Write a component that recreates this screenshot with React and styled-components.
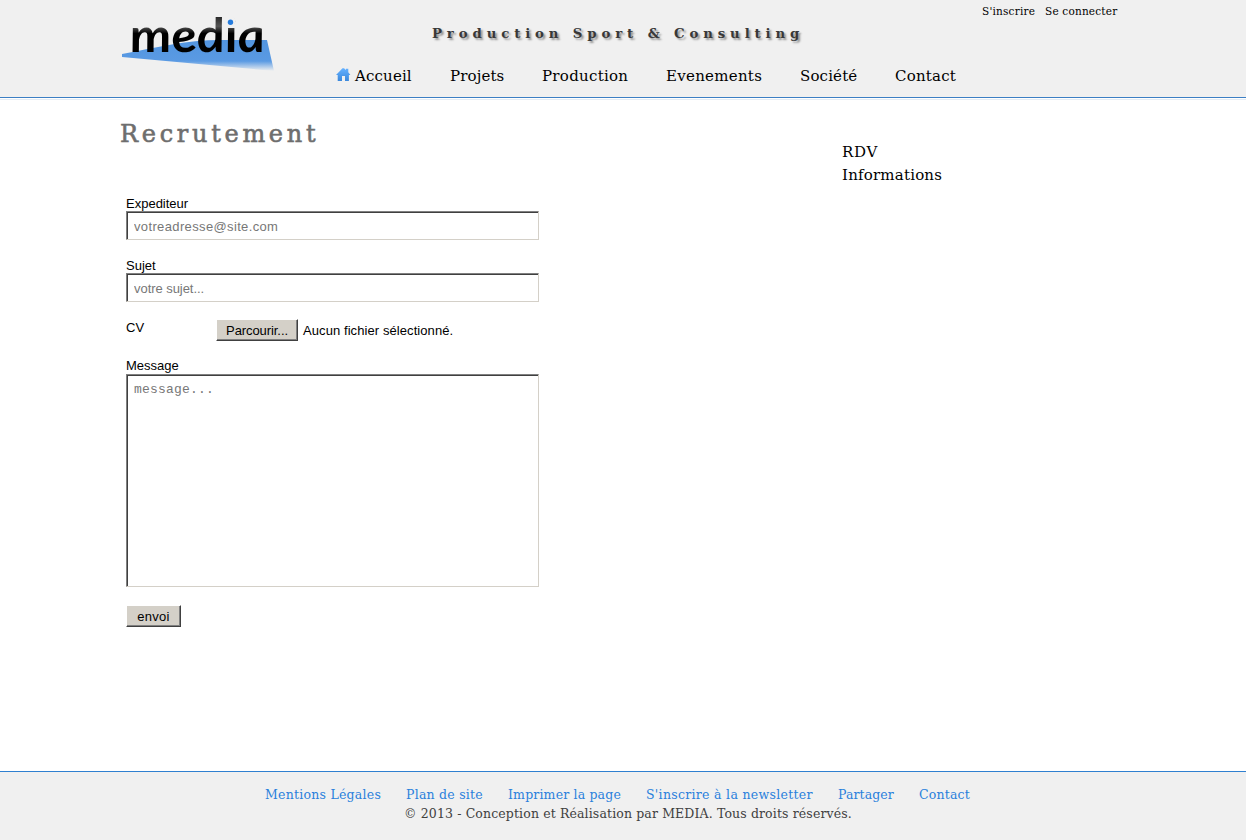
import React from "react";
import styled, { createGlobalStyle } from "styled-components";

const GlobalStyle = createGlobalStyle`
  * { box-sizing: border-box; }
  body {
    margin: 0;
    background: #fff;
    color: #000;
    font-family: "DejaVu Serif", "Bookman Old Style", serif;
  }
  a { color: inherit; text-decoration: none; }
`;

const Page = styled.div`
  height: 840px;
  display: flex;
  flex-direction: column;
  overflow: hidden;
`;

const Header = styled.header`
  height: 98px;
  flex: none;
  background: #f0f0f0;
  border-bottom: 1px solid #3c7fc4;
  box-shadow: 0 1px 0 #fff, 0 2px 0 #e4edf6;
`;

const HeaderInner = styled.div`
  width: 1006px;
  height: 97px;
  margin-left: 120px;
  display: flex;
`;

const Logo = styled.svg`
  width: 170px;
  height: 90px;
  flex: none;
`;

const Center = styled.div`
  width: 692px;
  padding: 24px 0 0 46px;
`;

const Tagline = styled.div`
  height: 20px;
  padding-left: 96px;
  font: bold 13.3px/20px "DejaVu Serif", serif;
  letter-spacing: 4.87px;
  color: #383838;
  text-shadow: 2px 2px 2px rgba(0, 0, 0, 0.4);
  white-space: nowrap;
`;

const Nav = styled.nav`
  display: flex;
  gap: 38px;
  margin-top: 21px;
  font-size: 15px;
  line-height: 22px;
  white-space: nowrap;
`;

const NavLink = styled.a`
  display: flex;
  width: ${(p) => p.$width}px;
  letter-spacing: ${(p) => p.$spacing}px;
`;

const HomeIcon = styled.svg`
  width: 16px;
  height: 14px;
  flex: none;
  margin: 3px 3px 0 0;
`;

const Account = styled.div`
  display: flex;
  gap: 10px;
  padding-top: 4px;
  font-size: 10.5px;
  line-height: 15px;
  white-space: nowrap;
`;

const AccountLink = styled.a`
  flex: none;
  width: ${(p) => p.$width}px;
  letter-spacing: 0.2px;
`;

const Main = styled.main`
  flex: 1;
  display: flex;
  padding-left: 120px;
`;

const Content = styled.section`
  width: 722px;
  padding-top: 20px;
`;

const Title = styled.h1`
  margin: 0 0 46px;
  font: normal 24px/32px "DejaVu Serif", serif;
  -webkit-text-stroke: 0.6px #6e6e6e;
  letter-spacing: 3.7px;
  color: #6e6e6e;
`;

const Aside = styled.aside`
  padding-top: 43px;
  font-size: 15px;
  line-height: 23px;
`;

const AsideLink = styled.a`
  display: block;
  letter-spacing: ${(p) => p.$spacing}px;
`;

const Form = styled.form`
  width: 413px;
  margin-left: 6px;
  font: 13px/15px "Liberation Sans", Arial, sans-serif;
`;

const Field = styled.div`
  margin-bottom: 18px;
`;

const Label = styled.label`
  display: block;
  height: ${(p) => p.$height || 15}px;
`;

const sunken = `
  display: block;
  width: 413px;
  margin: 0;
  background: #fff;
  border: 1px solid;
  border-color: #808080 #d4d0c8 #d4d0c8 #808080;
  border-radius: 0;
  box-shadow: inset 1px 1px 0 #404040;
  outline: 0;
  &::placeholder { color: #777; opacity: 1; }
`;

const Input = styled.input`
  ${sunken}
  height: 29px;
  padding: 2px 7px 0;
  font: 13px "Liberation Sans", Arial, sans-serif;
  letter-spacing: ${(p) => p.$spacing}px;
`;

const TextArea = styled.textarea`
  ${sunken}
  height: 213px;
  padding: 7px;
  resize: none;
  font: 13px/15px "Liberation Mono", "Courier New", monospace;
  letter-spacing: 0.2px;
`;

const FileRow = styled.div`
  display: flex;
  height: 22px;
  margin-bottom: 16px;
`;

const FileLabel = styled(Label)`
  width: 90px;
`;

const Button = styled.button`
  width: ${(p) => p.$width}px;
  height: 22px;
  padding: 1px 0 0;
  margin-top: ${(p) => p.$lift ? -1 : 0}px;
  flex: none;
  background: #d4d0c8;
  border: 1px solid;
  border-color: #fff #404040 #404040 #fff;
  border-radius: 0;
  box-shadow: inset -1px -1px 0 #808080;
  color: #000;
  font: 13px "Liberation Sans", Arial, sans-serif;
  letter-spacing: ${(p) => p.$spacing || 0}px;
  white-space: nowrap;
`;

const FileStatus = styled.span`
  margin-left: 5px;
  line-height: 21px;
  letter-spacing: 0.08px;
`;

const Footer = styled.footer`
  height: 69px;
  flex: none;
  background: #f0f0f0;
  border-top: 1px solid #2f80d0;
  padding-top: 13px;
  font-size: 12.5px;
  line-height: 19px;
  white-space: nowrap;
`;

const FooterNav = styled.nav`
  display: flex;
  gap: 25px;
  padding-left: 265px;
  color: #2a80dc;
`;

const FooterLink = styled.a`
  width: ${(p) => p.$width}px;
  letter-spacing: ${(p) => p.$spacing}px;
`;

const Copyright = styled.div`
  padding-left: 404px;
  color: #404040;
  letter-spacing: 0.13px;
`;

const navItems = [
  ["Projets", 54, 0.12],
  ["Production", 86, 0.28],
  ["Evenements", 96, 0.28],
  ["Société", 57, 0.15],
  ["Contact", 61, 0.22],
];

const footerItems = [
  ["Mentions Légales", 116, 0.24],
  ["Plan de site", 77, 0.24],
  ["Imprimer la page", 113, 0.17],
  ["S'inscrire à la newsletter", 167, 0.3],
  ["Partager", 56, 0.1],
  ["Contact", 51, 0.2],
];

function MediaLogo() {
  return (
    <Logo viewBox="0 0 170 90" role="img" aria-label="media">
      <defs>
        <linearGradient id="swoosh" x1="0" y1="40" x2="0" y2="71" gradientUnits="userSpaceOnUse">
          <stop offset="0" stopColor="#5295e0" />
          <stop offset="0.68" stopColor="#5a9ae3" />
          <stop offset="1" stopColor="#f0f0f0" />
        </linearGradient>
        <linearGradient id="letters" x1="0" y1="-36" x2="0" y2="0" gradientUnits="userSpaceOnUse">
          <stop offset="0" stopColor="#222" />
          <stop offset="0.3" stopColor="#555" />
          <stop offset="0.5" stopColor="#000" />
          <stop offset="1" stopColor="#000" />
        </linearGradient>
      </defs>
      <path d="M2 54 C34 48 66 40 101 40 H147 L154 71 L2 57Z" fill="url(#swoosh)" />
      <text
        transform="translate(11.5 51.5) skewX(7)"
        textLength="135"
        lengthAdjust="spacingAndGlyphs"
        fontFamily="Lato, sans-serif"
        fontSize="47"
        fontStyle="italic"
        fontWeight="700"
        fill="url(#letters)"
      >
        media
      </text>
      <circle cx="110.7" cy="21" r="4.9" fill="#f0f0f0" />
      <circle cx="110.5" cy="22.3" r="2.7" fill="#247bdc" />
    </Logo>
  );
}

export default function App() {
  return (
    <Page>
      <GlobalStyle />
      <Header>
        <HeaderInner>
          <MediaLogo />
          <Center>
            <Tagline>Production Sport &amp; Consulting</Tagline>
            <Nav>
              <NavLink href="#" $width={76} $spacing={0.15}>
                <HomeIcon viewBox="0 0 16 14">
                  <defs>
                    <linearGradient id="home" x1="0" y1="0" x2="0" y2="1">
                      <stop offset="0" stopColor="#65b1ff" />
                      <stop offset="1" stopColor="#3b88dc" />
                    </linearGradient>
                  </defs>
                  <path d="M0 7 L6.5 0.3 H8 L10 2 V0.8 H12.3 V4.2 L14.4 7 H12.9 V13 H9 V8 H6 V13 H1.7 V7Z" fill="url(#home)" />
                </HomeIcon>
                Accueil
              </NavLink>
              {navItems.map(([label, width, spacing]) => (
                <NavLink href="#" key={label} $width={width} $spacing={spacing}>{label}</NavLink>
              ))}
            </Nav>
          </Center>
          <Account>
            <AccountLink href="#" $width={53}>S'inscrire</AccountLink>
            <AccountLink href="#" $width={73}>Se connecter</AccountLink>
          </Account>
        </HeaderInner>
      </Header>
      <Main>
        <Content>
          <Title>Recrutement</Title>
          <Form onSubmit={(e) => e.preventDefault()}>
            <Field>
              <Label htmlFor="sender">Expediteur</Label>
              <Input id="sender" placeholder="votreadresse@site.com" $spacing={0.36} />
            </Field>
            <Field>
              <Label htmlFor="subject">Sujet</Label>
              <Input id="subject" placeholder="votre sujet..." $spacing={-0.05} />
            </Field>
            <FileRow>
              <FileLabel>CV</FileLabel>
              <Button type="button" $width={82} $spacing={-0.08} $lift>Parcourir...</Button>
              <FileStatus>Aucun fichier sélectionné.</FileStatus>
            </FileRow>
            <Field>
              <Label htmlFor="message" $height={16}>Message</Label>
              <TextArea id="message" placeholder="message..." />
            </Field>
            <Button type="submit" $width={55} $spacing={0.3}>envoi</Button>
          </Form>
        </Content>
        <Aside>
          <AsideLink href="#" $spacing={0.7}>RDV</AsideLink>
          <AsideLink href="#" $spacing={0.2}>Informations</AsideLink>
        </Aside>
      </Main>
      <Footer>
        <FooterNav>
          {footerItems.map(([label, width, spacing]) => (
            <FooterLink href="#" key={label} $width={width} $spacing={spacing}>{label}</FooterLink>
          ))}
        </FooterNav>
        <Copyright>© 2013 - Conception et Réalisation par MEDIA. Tous droits réservés.</Copyright>
      </Footer>
    </Page>
  );
}
